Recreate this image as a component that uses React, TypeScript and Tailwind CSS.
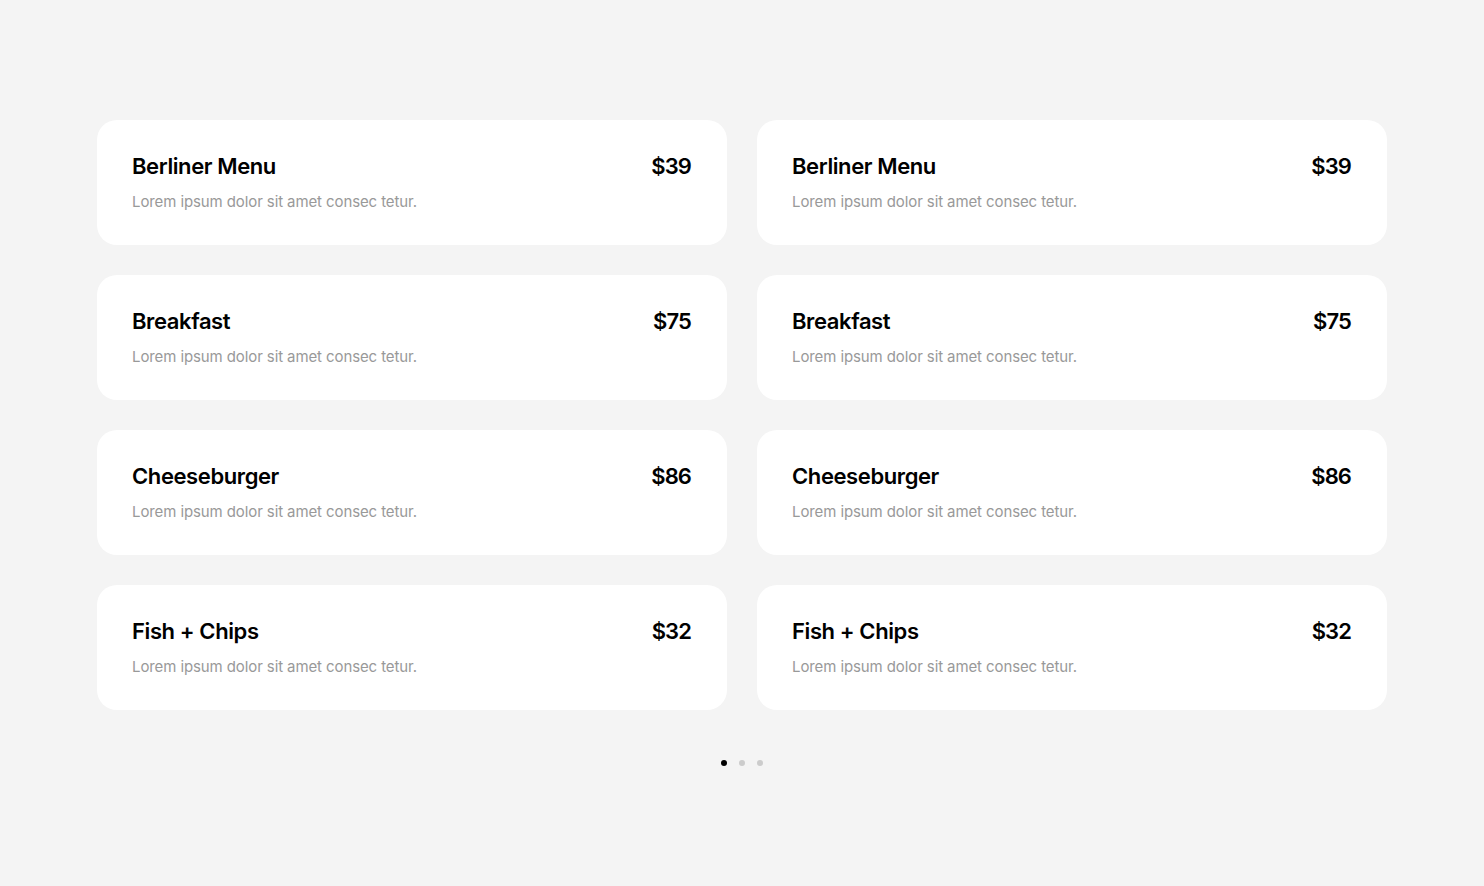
import React from "react";

const items = [
  { name: "Berliner Menu", price: "$39" },
  { name: "Breakfast", price: "$75" },
  { name: "Cheeseburger", price: "$86" },
  { name: "Fish + Chips", price: "$32" },
];

function Card({ name, price }: { name: string; price: string }) {
  return (
    <div className="bg-white rounded-[20px] h-[125px] pl-[35px] pr-[36px] pt-[33px]">
      <div className="flex items-start justify-between">
        <h3 className="text-[22px] leading-[26px] font-semibold text-black tracking-[-0.4px]">{name}</h3>
        <span className="text-[22px] leading-[26px] font-semibold text-black tracking-[-0.9px]">{price}</span>
      </div>
      <p className="mt-[13px] text-[15px] leading-[20px] text-[#999999] tracking-[-0.1px]">
        Lorem ipsum dolor sit amet consec tetur.
      </p>
    </div>
  );
}

export default function App() {
  return (
    <div
      className="min-h-[886px] bg-[#f4f4f4] pt-[120px]"
      style={{ fontFamily: "Inter, 'Noto Sans', sans-serif" }}
    >
      <div className="mx-auto w-[1290px] grid grid-cols-2 gap-[30px]">
        {items.map((it) => (
          <React.Fragment key={it.name}>
            <Card {...it} />
            <Card {...it} />
          </React.Fragment>
        ))}
      </div>
      <div className="mt-[50px] flex justify-center gap-[12px]">
        <span className="w-[6px] h-[6px] rounded-full bg-black" />
        <span className="w-[6px] h-[6px] rounded-full bg-[#cccccc]" />
        <span className="w-[6px] h-[6px] rounded-full bg-[#cccccc]" />
      </div>
    </div>
  );
}
